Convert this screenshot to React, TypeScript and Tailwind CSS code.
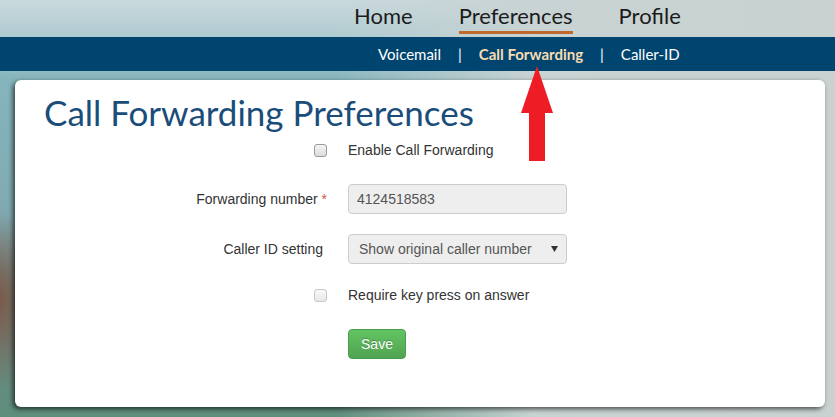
import React from 'react';

const navLinks = ['Home', 'Preferences', 'Profile'];

const subLinks = [
  { label: 'Voicemail', active: false },
  { label: 'Call Forwarding', active: true },
  { label: 'Caller-ID', active: false },
];

const CaretIcon = (): React.ReactElement => (
  <svg width="7" height="6" viewBox="0 0 7 6" className="fill-[#333]">
    <path d="M0 0h7L3.5 6z" />
  </svg>
);

const RedArrow = (): React.ReactElement => (
  <svg
    width="32"
    height="95"
    viewBox="0 0 32 95"
    className="absolute left-[521px] top-[66px]"
  >
    <path d="M16 0L32 47H24V95H8V47H0z" fill="#ee1c25" />
  </svg>
);

const App = (): React.ReactElement => {
  return (
    <div className="relative h-[417px] w-[835px] overflow-hidden bg-[radial-gradient(ellipse_40px_90px_at_0%_72%,#7a5a4a_0%,transparent_100%),linear-gradient(to_bottom,#cad9de_0px,#aecbd0_37px,#86b5bd_80px,#7fa9b0_220px,#6f8a86_300px,#5e8e7c_417px)]">
      <div className="absolute right-0 top-0 h-full w-[60%] bg-[linear-gradient(to_right,transparent,#c8d3d3_40%,#c9d2d1)]" />

      <div className="relative flex h-[37px] items-start gap-[46px] pl-[354px] pt-[3px] font-['Lato',sans-serif] text-[22px] text-[#1c1c1c]">
        {navLinks.map((link) => (
          <div key={link} className="flex flex-col">
            <span className="leading-[26px]">{link}</span>
            {link === 'Preferences' && (
              <span className="mt-[2px] h-[3px] bg-[#bf6a2c]" />
            )}
          </div>
        ))}
      </div>

      <div className="relative flex h-[34px] items-center gap-[17px] bg-[#00456f] pl-[378px] font-['Lato',sans-serif] text-[15px] text-white">
        {subLinks.map((item, i) => (
          <React.Fragment key={item.label}>
            {i > 0 && <span>|</span>}
            <span
              className={
                item.active ? 'font-bold text-[#f7dcb3]' : 'text-white'
              }
            >
              {item.label}
            </span>
          </React.Fragment>
        ))}
      </div>

      <div className="relative ml-[15px] mt-[9px] h-[327px] w-[810px] rounded-[6px] bg-white shadow-[-2px_2px_5px_rgba(0,0,0,0.65)]">
        <h1 className="pl-[29px] pt-[12px] font-['Lato',sans-serif] text-[35px] leading-[40px] text-[#1a4d7a]">
          Call Forwarding Preferences
        </h1>

        <div className="mt-[8px] grid grid-cols-[313px_219px] items-center gap-x-5 font-['Liberation_Sans',Arial,sans-serif] text-[14px] text-[#333]">
          <div className="flex h-[20px] justify-end pr-[1px]">
            <input
              type="checkbox"
              className="mt-[4px] h-[13px] w-[13px] appearance-none rounded-[3px] border border-[#9a9a9a] bg-[linear-gradient(#f4f4f4,#dcdcdc)]"
            />
          </div>
          <label className="h-[20px] leading-[20px]">Enable Call Forwarding</label>

          <label className="mt-[24px] pr-[1px] text-right">
            Forwarding number <span className="text-[#d9534f]">*</span>
          </label>
          <input
            type="text"
            defaultValue="4124518583"
            readOnly
            className="mt-[24px] h-[30px] rounded-[4px] border border-[#ccc] bg-[#eee] px-[8px] text-[14px] text-[#555] outline-none"
          />

          <label className="mt-[20px] pr-[5px] text-right">Caller ID setting</label>
          <div className="relative mt-[20px] h-[30px]">
            <select className="h-[30px] w-full appearance-none rounded-[4px] border border-[#ccc] bg-[#eee] pl-[10px] text-[14px] text-[#555] outline-none">
              <option>Show original caller number</option>
            </select>
            <span className="pointer-events-none absolute right-[9px] top-[12px]">
              <CaretIcon />
            </span>
          </div>

          <div className="mt-[21px] flex h-[20px] justify-end pr-[1px]">
            <input
              type="checkbox"
              disabled
              className="mt-[4px] h-[13px] w-[13px] appearance-none rounded-[3px] border border-[#c8c8c8] bg-[linear-gradient(#f8f8f8,#e8e8e8)]"
            />
          </div>
          <label className="mt-[21px] h-[20px] leading-[20px]">
            Require key press on answer
          </label>

          <div className="mt-[24px]" />
          <div className="mt-[24px]">
            <button className="h-[30px] w-[58px] rounded-[4px] border border-[#4a9d4a] bg-[linear-gradient(#62c462,#51a351)] text-[14px] text-white [text-shadow:0_-1px_0_rgba(0,0,0,0.25)]">
              Save
            </button>
          </div>
        </div>
      </div>

      <RedArrow />
    </div>
  );
};

export default App;
